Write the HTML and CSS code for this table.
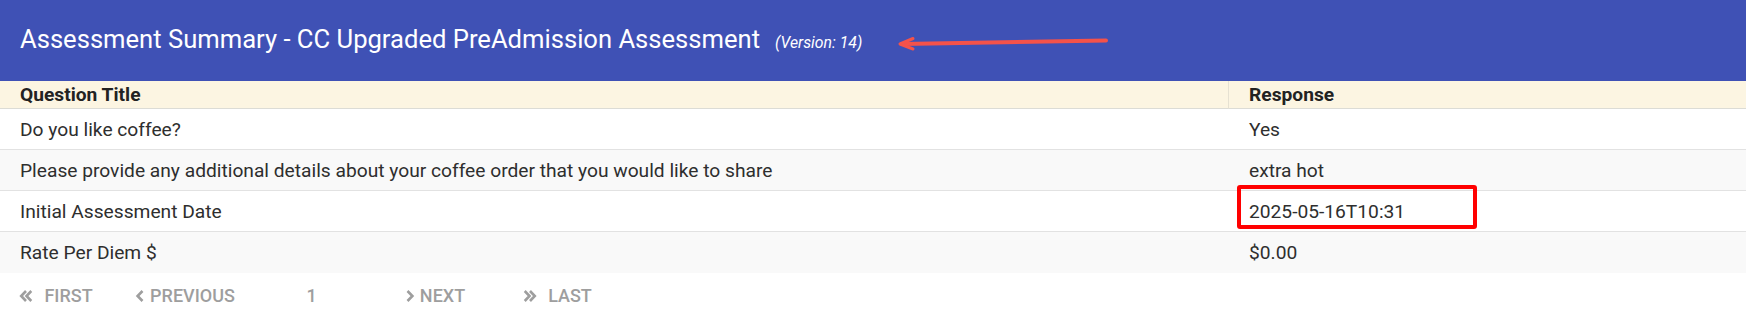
FILE: index.html
```html
<!DOCTYPE html>
<html lang="en">
<head>
<meta charset="utf-8">
<title>Assessment Summary</title>
<link rel="stylesheet" href="styles.css">
</head>
<body>
<div class="page">
  <header class="title-bar">
    <h1 class="title">Assessment Summary - CC Upgraded PreAdmission Assessment</h1>
    <span class="version">(Version: 14)</span>
    <svg class="annot-arrow" width="240" height="30" viewBox="0 0 240 30" aria-hidden="true">
      <path d="M1106 40.5 L902 44" transform="translate(-880 -26)" fill="none" stroke="#f4524a" stroke-width="4" stroke-linecap="round"/>
      <path d="M913 38.5 L900 44 L913 49" transform="translate(-880 -26)" fill="none" stroke="#f4524a" stroke-width="3" stroke-linecap="round" stroke-linejoin="round"/>
    </svg>
  </header>
  <div class="grid">
    <div class="cell head head-left">Question Title</div>
    <div class="cell head">Response</div>

    <div class="cell">Do you like coffee?</div>
    <div class="cell">Yes</div>

    <div class="cell alt">Please provide any additional details about your coffee order that you would like to share</div>
    <div class="cell alt">extra hot</div>

    <div class="cell">Initial Assessment Date</div>
    <div class="cell marked">2025-05-16T10:31<span class="highlight-box"></span></div>

    <div class="cell alt last">Rate Per Diem $</div>
    <div class="cell alt last">$0.00</div>
  </div>
  <nav class="pager">
    <span class="pg pg-first">
      <svg class="ic ic-dbl" width="14" height="14" viewBox="0 0 14 14"><path d="M7 2 L2.2 7 L7 12 M12.3 2 L7.5 7 L12.3 12" fill="none" stroke="currentColor" stroke-width="2.6"/></svg>FIRST
    </span>
    <span class="pg pg-prev">
      <svg class="ic" width="10" height="14" viewBox="0 0 10 14"><path d="M7.5 2 L2.6 7 L7.5 12" fill="none" stroke="currentColor" stroke-width="2.6"/></svg>PREVIOUS
    </span>
    <span class="pg pg-num">1</span>
    <span class="pg pg-next">
      <svg class="ic" width="10" height="14" viewBox="0 0 10 14"><path d="M2.5 2 L7.4 7 L2.5 12" fill="none" stroke="currentColor" stroke-width="2.6"/></svg>NEXT
    </span>
    <span class="pg pg-last">
      <svg class="ic ic-dbl" width="14" height="14" viewBox="0 0 14 14"><path d="M1.7 2 L6.5 7 L1.7 12 M7 2 L11.8 7 L7 12" fill="none" stroke="currentColor" stroke-width="2.6"/></svg>LAST
    </span>
  </nav>
</div>
</body>
</html>
```

FILE: styles.css
```css
* { box-sizing: border-box; }
html, body { margin: 0; padding: 0; background: #ffffff; }
body {
  font-family: Roboto, "Liberation Sans", Arial, sans-serif;
  color: #2e2e2e;
  width: 1746px;
  height: 316px;
  overflow: hidden;
}
.page { width: 1746px; }

.title-bar {
  position: relative;
  height: 81px;
  background: #3f51b5;
  color: #ffffff;
  display: flex;
  align-items: baseline;
  padding: 24px 0 0 20px;
}
.title {
  margin: 0;
  font-size: 25.6px;
  font-weight: 400;
  line-height: 30px;
  letter-spacing: 0;
}
.version {
  margin-left: 15px;
  font-size: 15.8px;
  font-style: italic;
}
.annot-arrow {
  position: absolute;
  left: 880px;
  top: 26px;
  overflow: visible;
}

.grid {
  display: grid;
  grid-template-columns: 1229px 1fr;
}
.cell {
  font-size: 19.2px;
  line-height: 23px;
  padding: 9px 20px 8px 20px;
  border-bottom: 1px solid #e2e2e2;
  background: #ffffff;
}
.cell.alt { background: #f9f9f9; }
.cell.last { border-bottom: none; padding-bottom: 9px; }
.head {
  background: #fcf5e2;
  font-weight: 700;
  color: #222222;
  padding: 2px 20px 2px 20px;
  border-bottom: 1px solid #dcdcd6;
}
.head-left { border-right: 1px solid #e6e1d2; }

.marked { position: relative; }
.highlight-box {
  position: absolute;
  left: 8px;
  top: -6px;
  width: 240px;
  height: 44px;
  border: 4px solid #ff0000;
  border-radius: 3px;
}

.pager {
  display: grid;
  grid-template-columns: 112px 146px 107px 140px 105px;
  padding-top: 12px;
  color: #9e9e9e;
  font-size: 18px;
  line-height: 22px;
  font-weight: 500;
}
.pg {
  display: flex;
  justify-content: center;
  align-items: center;
}
.ic { margin-right: 5px; }
.ic-dbl { margin-right: 11px; }
```
